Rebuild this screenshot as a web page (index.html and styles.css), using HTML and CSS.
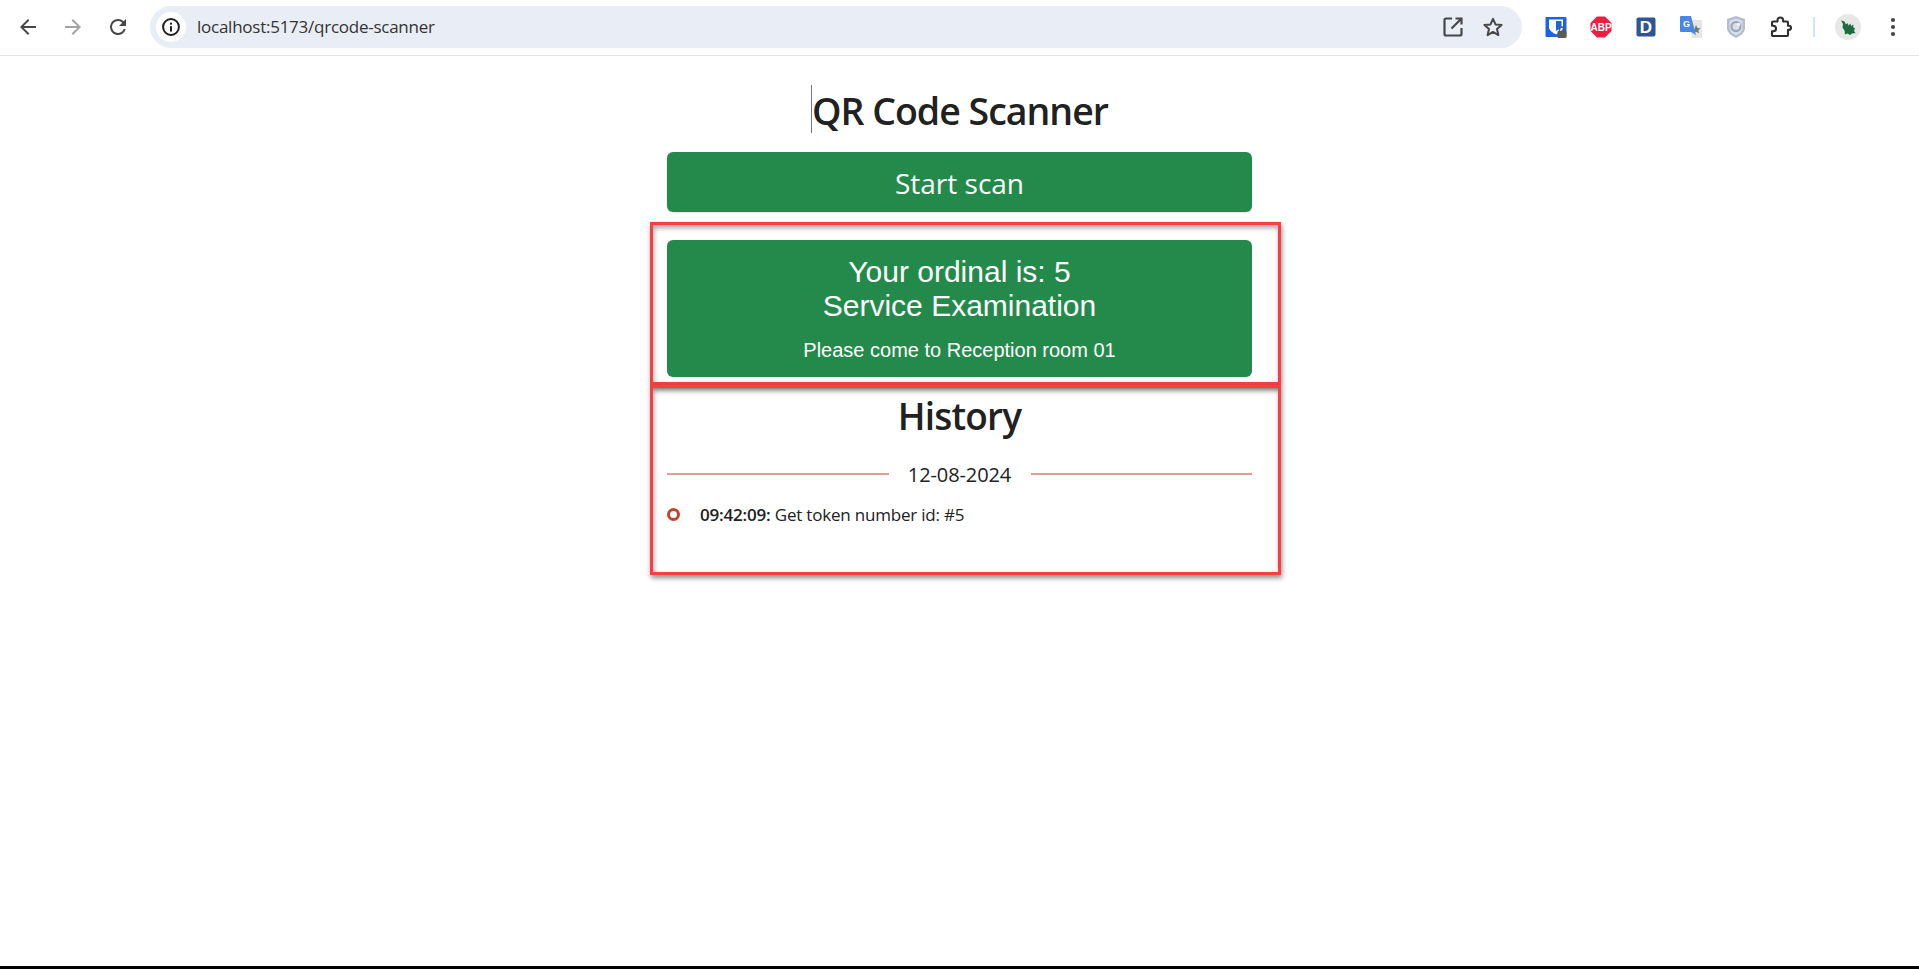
FILE: index.html
```html
<!DOCTYPE html>
<html lang="en">
<head>
<meta charset="utf-8">
<title>QR Code Scanner</title>
<link rel="stylesheet" href="styles.css">
</head>
<body>
<header class="toolbar">
  <nav class="nav-buttons">
    <svg class="icon" viewBox="0 0 24 24"><path d="M20 11H7.800l5.600-5.600L12 4l-8 8 8 8 1.400-1.400L7.800 13H20z" fill="#474747"/></svg>
    <svg class="icon" viewBox="0 0 24 24"><path d="M4 11h12.200l-5.600-5.600L12 4l8 8-8 8-1.400-1.400 5.600-5.600H4z" fill="#a3a3a3"/></svg>
    <svg class="icon" viewBox="0 0 24 24"><path d="M17.650 6.350A7.950 7.950 0 0 0 12 4a8 8 0 1 0 7.730 10h-2.080A6 6 0 1 1 12 6c1.660 0 3.140.69 4.220 1.780L13 11h7V4z" fill="#474747"/></svg>
  </nav>
  <div class="omnibox">
    <span class="site-info">
      <svg class="icon-info" viewBox="0 0 24 24"><circle cx="12" cy="12" r="9.500" fill="none" stroke="#1f1f1f" stroke-width="2.400"/><rect x="10.800" y="11" width="2.400" height="6.500" fill="#1f1f1f"/><rect x="10.800" y="6.800" width="2.400" height="2.400" fill="#1f1f1f"/></svg>
    </span>
    <span class="url">localhost:5173/qrcode-scanner</span>
    <span class="omni-actions">
      <svg class="icon" viewBox="0 0 24 24"><path d="M11 3.500H5A1.500 1.500 0 0 0 3.500 5v14A1.500 1.500 0 0 0 5 20.500h14a1.500 1.500 0 0 0 1.500-1.500v-6M14.500 3.500h6v6M20.500 3.500L10.500 13.500" fill="none" stroke="#474747" stroke-width="2.200"/></svg>
      <svg class="icon" viewBox="0 0 24 24"><path d="M12 3.800l2.500 5.600 6.100.6-4.600 4.100 1.400 6-5.400-3.200-5.400 3.200 1.400-6L3.400 10l6.100-.6z" fill="none" stroke="#474747" stroke-width="2" stroke-linejoin="round"/></svg>
    </span>
  </div>
  <div class="extensions">
    <svg class="ext" viewBox="0 0 24 24"><rect x="1.500" y="2" width="21" height="20" rx="1" fill="#1a66e0"/><path d="M5 4.500h14v8c0 2.500-4 5.500-7 7-3-1.500-7-4.500-7-7z" fill="#fff"/><path d="M12 6h5.500v6.500L12 16z" fill="#1a66e0"/><rect x="13.500" y="16" width="9" height="7" rx="1" fill="#5a5a5a"/><path d="M15.500 16v-1.500a2.500 2.500 0 0 1 5 0V16" fill="none" stroke="#5a5a5a" stroke-width="1.500"/></svg>
    <svg class="ext" viewBox="0 0 24 24"><path d="M8 1.500h8L22.500 8v8L16 22.500H8L1.500 16V8z" fill="#ee1c3f"/><text x="12" y="15.700" class="abp-text">ABP</text></svg>
    <svg class="ext" viewBox="0 0 24 24"><rect x="2.500" y="2.500" width="19" height="19" rx="2" fill="#2f5597"/><text x="12" y="18.300" class="d-text">D</text></svg>
    <svg class="ext" viewBox="0 0 24 24"><path d="M11 5h11a1 1 0 0 1 1 1v17H13z" fill="#e4e6e4"/><path d="M17 10l1.500 3 3 .3-2.200 2 .7 3-3-1.600-3 1.600z" fill="#6b7b78"/><path d="M2 1h10l5 19-5-3H2a1 1 0 0 1-1-1V2a1 1 0 0 1 1-1z" fill="#4a86e8"/><text x="7.500" y="12" class="g-text">G</text></svg>
    <svg class="ext" viewBox="0 0 24 24"><path d="M12 1l9 3v9c0 5-5 8-9 10-4-2-9-5-9-10V4z" fill="#b4bdcc"/><path d="M12 3.500l6.500 2.200V13c0 3.500-3.500 5.800-6.500 7.300-3-1.500-6.500-3.800-6.500-7.300V5.700z" fill="#d9dfe8"/><circle cx="12" cy="11.500" r="4.500" fill="none" stroke="#97a3b6" stroke-width="2"/><circle cx="14.500" cy="9.500" r="1.800" fill="#eef1f5"/></svg>
    <svg class="ext" viewBox="0 0 24 24"><path d="M4 6.500h4.500V5.300a2.800 2.800 0 0 1 5.600 0v1.200H18a1 1 0 0 1 1 1v3.200h.9a2.100 2.100 0 0 1 0 4.200H19v5.100a1 1 0 0 1-1 1H4a1 1 0 0 1-1-1v-3.700h1.200a2.800 2.800 0 0 0 0-5.600H3V7.500a1 1 0 0 1 1-1z" fill="none" stroke="#2f2f2f" stroke-width="2.100" stroke-linejoin="round"/></svg>
    <span class="divider"></span>
    <svg class="avatar" viewBox="0 0 26 26"><circle cx="13" cy="13" r="13" fill="#e6e8e6"/><path d="M6 6.500l3.500 1 1.500 3 1.500-1.500 1 2.500 2-2 .5 2.500 2.500-1.500-.5 3 2 .5-1 3 1.500 2-3.500.5-2 1.500-2.500-1.500-2.500 1-.5-4-2-3 .5-3.500z" fill="#1e6b40"/></svg>
    <svg class="menu-dots" viewBox="0 0 24 24"><circle cx="12" cy="5" r="2.100" fill="#474747"/><circle cx="12" cy="12" r="2.100" fill="#474747"/><circle cx="12" cy="19" r="2.100" fill="#474747"/></svg>
  </div>
</header>

<main class="page">
  <h1 class="title"><span class="title-text">QR Code Scanner</span></h1>
  <button class="start-btn" type="button">Start scan</button>

  <section class="frame frame-result">
    <div class="result-card">
      <p class="result-main">Your ordinal is: 5<br>Service Examination</p>
      <p class="result-sub">Please come to Reception room 01</p>
    </div>
  </section>

  <section class="frame frame-history">
    <h2 class="history-title">History</h2>
    <div class="date-row"><span class="date-line"></span><span class="date-text">12-08-2024</span><span class="date-line"></span></div>
    <div class="entry"><span class="entry-dot"></span><span class="entry-text"><b>09:42:09:</b> Get token number id: #5</span></div>
  </section>
</main>
<div class="bottom-strip"></div>
</body>
</html>
```
FILE: styles.css
```css
* { box-sizing: border-box; }
html, body { height: 100%; }
body {
  margin: 0;
  height: 969px;
  overflow: hidden;
  background: #fff;
  display: flex;
  flex-direction: column;
  font-family: "Open Sans", "Noto Sans", sans-serif;
  color: #212121;
}
.toolbar {
  height: 56px;
  flex: none;
  display: flex;
  align-items: center;
  border-bottom: 1px solid #e3e3e3;
  padding: 0 0 2px 16px;
}
.nav-buttons { display: flex; gap: 21px; width: 134px; flex: none; align-items: center; }
.icon { width: 24px; height: 24px; display: block; flex: none; }
.omnibox {
  width: 1372px;
  height: 42px;
  flex: none;
  border-radius: 21px;
  background: #e9edf6;
  display: flex;
  align-items: center;
  padding-left: 6px;
}
.site-info {
  width: 30px; height: 30px; border-radius: 50%;
  background: #fff;
  display: flex; align-items: center; justify-content: center;
  flex: none;
}
.icon-info { width: 20px; height: 20px; display: block; }
.url {
  margin-left: 11px;
  font-family: "Open Sans", sans-serif;
  font-size: 17px;
  letter-spacing: -0.25px;
  color: #333;
  flex: 1;
}
.omni-actions { display: flex; gap: 16px; padding-right: 17px; }
.extensions { flex: none; display: flex; align-items: center; padding-left: 22px; }
.ext { width: 24px; height: 24px; display: block; flex: none; margin-right: 21px; }
.abp-text { font: 700 10px "Liberation Sans", sans-serif; fill: #fff; text-anchor: middle; }
.d-text { font: 700 17px "Liberation Sans", sans-serif; fill: #fff; text-anchor: middle; }
.g-text { font: 700 9px "Liberation Sans", sans-serif; fill: #fff; text-anchor: middle; }
.divider { width: 2px; height: 20px; background: #d3e3fd; margin: 0 20px 0 -1px; flex: none; }
.avatar { width: 26px; height: 26px; flex: none; display: block; margin-right: 20px; }
.menu-dots { width: 24px; height: 24px; display: block; flex: none; }

.page {
  flex: 1;
  width: 585px;
  margin-left: 667px;
  display: flex;
  flex-direction: column;
  align-items: stretch;
}
.title {
  margin: 29px 0 0;
  height: 48px;
  font-size: 37.500px;
  font-weight: 600;
  line-height: 45px;
  text-align: center;
  color: #212121;
}
.title-text { display: inline-block; height: 48px; border-left: 1.500px solid #777; padding-top: 3px; letter-spacing: -1px; }
.start-btn {
  margin-top: 19px;
  height: 60px;
  border: 0;
  border-radius: 6px;
  background: #248a4b;
  box-shadow: 0 1px 2px rgba(0,0,0,.12);
  color: #fff;
  font-family: inherit;
  font-size: 28px;
  padding: 2px 0 0;
}
.frame {
  margin: 0 -28.500px 0 -17px;
  border: 3px solid #f44045;
  box-shadow: 1px 3px 5px rgba(0,0,0,.45), inset 1px 3px 5px rgba(0,0,0,.35);
  padding: 0 25.500px 0 14px;
}
.frame-result { margin-top: 10px; height: 163px; padding-top: 15px; }
.frame-history { height: 190px; }
.result-card {
  height: 137px;
  background: #248a4b;
  border-radius: 6px;
  color: #fff;
  text-align: center;
  font-family: "Liberation Sans", Arial, sans-serif;
  padding-top: 15px;
}
.result-main { margin: 0; font-size: 30px; line-height: 34px; }
.result-sub { margin: 13px 0 0; font-size: 20px; line-height: 28px; }
.history-title {
  margin: 3.500px 0 0;
  font-size: 37px;
  font-weight: 600;
  line-height: 48px;
  text-align: center;
  letter-spacing: -0.8px;
}
.date-row { display: flex; align-items: center; margin-top: 20px; }
.date-line { flex: 1; height: 2px; background: #dda095; }
.date-text { width: 142px; text-align: center; font-size: 20px; font-weight: 500; line-height: 26px; padding-top: 2px; letter-spacing: -0.1px; }
.entry { display: flex; align-items: center; margin-top: 15px; }
.entry-dot { width: 13px; height: 13px; border: 3.500px solid #c0432f; border-radius: 50%; flex: none; margin-right: 20px; }
.entry-text { font-size: 17px; line-height: 24px; letter-spacing: -0.2px; }
.entry-text b { font-weight: 600; }
.bottom-strip { height: 3px; background: #000; flex: none; }
```
